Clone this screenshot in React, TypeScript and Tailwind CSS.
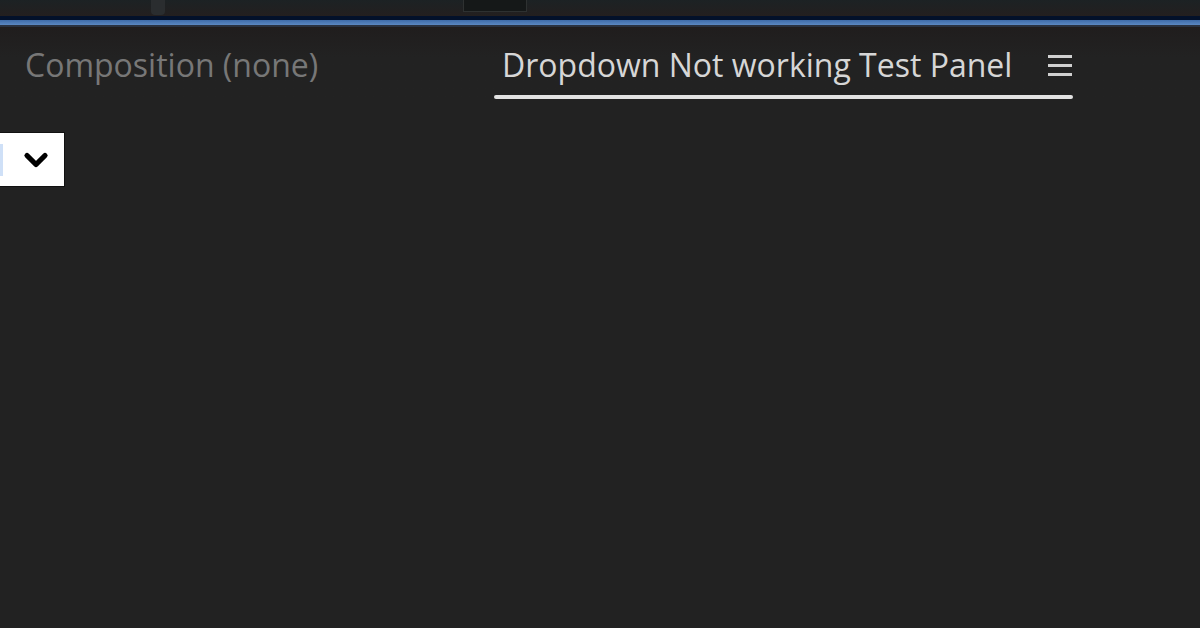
import { ChevronDown } from "lucide-react";

export default function App() {
  return (
    <div className="w-[1200px] h-[628px] overflow-hidden bg-[#222222] flex flex-col" style={{ fontFamily: '"Open Sans", "Noto Sans", sans-serif' }}>
      {/* top strip */}
      <div className="h-[16px] bg-gradient-to-b from-[#1c2224] to-[#231f1f] flex items-start shrink-0">
        <div className="ml-[151px] w-[14px] h-[15px] bg-[#2a2d2f] rounded-b-sm" />
        <div className="ml-[298px] w-[64px] h-[12px] bg-[#151818] border border-[#2e3131] border-t-0" />
      </div>
      <div className="h-[4px] bg-[#03112a] shrink-0" />
      <div className="h-[5px] bg-gradient-to-b from-[#3e6ba8] to-[#5b88c2] shrink-0" />
      <div className="h-[2px] bg-[#2a3240] shrink-0" />

      {/* tabs */}
      <div className="flex items-start h-[75px] pt-[18px] bg-gradient-to-b from-[#201d1d] to-[#222222] to-40%">
        <div className="pl-[25px] w-[494px] text-[32px] leading-[40px] text-[#777777]">
          Composition (none)
        </div>
        <div className="flex flex-col w-[579px]">
          <div className="flex items-center pl-[8px] h-[40px]">
            <span className="text-[32px] leading-[40px] text-[#d6d6d6]">Dropdown Not working Test Panel</span>
            <span className="ml-auto mr-[1px] flex flex-col gap-[6px] w-[24px]">
              <span className="h-[3px] bg-[#d0d0d0]" />
              <span className="h-[3px] bg-[#d0d0d0]" />
              <span className="h-[3px] bg-[#d0d0d0]" />
            </span>
          </div>
          <div className="mt-[10px] h-[4px] bg-[#e2e2e2] rounded-full" />
        </div>
      </div>

      {/* dropdown */}
      <div className="pt-[30px]">
        <div className="w-[65px] h-[55px] bg-white border border-[#111] border-l-0 flex items-center">
          <div className="w-[3px] h-[32px] bg-[#cfe0f7]" />
          <ChevronDown className="ml-[15px] w-[36px] h-[36px] text-black" strokeWidth={3.5} />
        </div>
      </div>
    </div>
  );
}
